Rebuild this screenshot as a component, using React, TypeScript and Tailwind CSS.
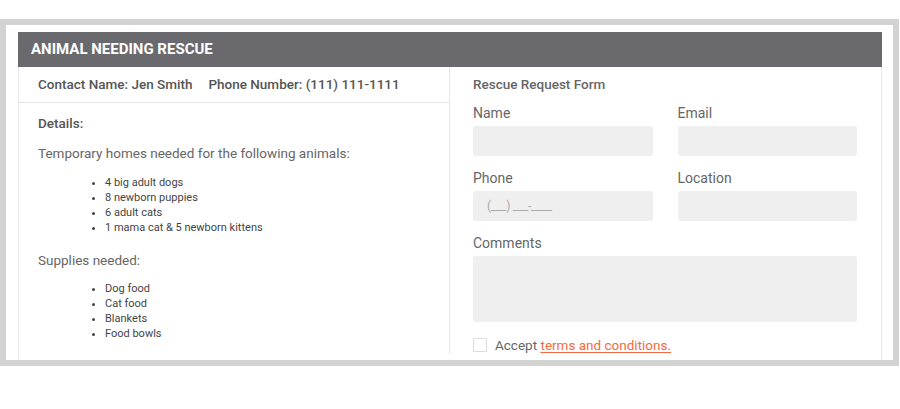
const animals = ['4 big adult dogs', '8 newborn puppies', '6 adult cats', '1 mama cat & 5 newborn kittens'];
const supplies = ['Dog food', 'Cat food', 'Blankets', 'Food bowls'];

const Field = ({ label, placeholder }: { label: string; placeholder?: string }) => (
  <div className="flex flex-col">
    <label className="text-[14px] leading-[20px] text-[#666]">{label}</label>
    <div className="mt-[3px] flex h-[30px] items-center rounded-[3px] bg-[#efefef] pl-[14px] text-[12px] tracking-tight text-[#aaa]">
      {placeholder}
    </div>
  </div>
);

const App = () => {
  return (
    <div className="h-[409px] w-[900px] bg-white pt-[19px]" style={{ fontFamily: 'Roboto, "Liberation Sans", sans-serif' }}>
      <div className="h-[347px] w-[899px] overflow-hidden border-[6px] border-[#d3d3d3] bg-white pl-[12px] pr-[11px] pt-[7px]">
        <div className="h-[400px] border border-t-0 border-[#e6e6e6]">
          <div className="-mx-px flex h-[35px] items-center bg-[#6a696e] pl-[13px] text-[15px] font-bold text-white">
            ANIMAL NEEDING RESCUE
          </div>
          <div className="flex">
            <div className="w-[431px] border-r border-[#e6e6e6]">
              <div className="flex h-[36px] items-center gap-[16px] border-b border-[#e6e6e6] pl-[19px] text-[13.5px] font-medium text-[#555]">
                <span>Contact Name: Jen Smith</span>
                <span>Phone Number: (111) 111-1111</span>
              </div>
              <div className="pl-[19px] pt-[10px] text-[#666]">
                <p className="text-[13.5px] font-medium leading-[20px] text-[#555]">Details:</p>
                <p className="mt-[10px] text-[13.5px] leading-[20px]">Temporary homes needed for the following animals:</p>
                <ul className="mt-[11.5px] list-disc pl-[67px] text-[11px] leading-[15px] text-[#444]">
                  {animals.map((a) => (
                    <li key={a}>{a}</li>
                  ))}
                </ul>
                <p className="mt-[15.5px] text-[13.5px] leading-[20px]">Supplies needed:</p>
                <ul className="mt-[10.5px] list-disc pl-[67px] text-[11px] leading-[15px] text-[#444]">
                  {supplies.map((s) => (
                    <li key={s}>{s}</li>
                  ))}
                </ul>
              </div>
            </div>
            <div className="flex-1 pl-[23px] pr-[24px] pt-[7px]">
              <p className="text-[13.5px] font-medium leading-[20px] text-[#666]">Rescue Request Form</p>
              <div className="mt-[9px] grid grid-cols-2 gap-x-[25px] gap-y-[12px]">
                <Field label="Name" />
                <Field label="Email" />
                <Field label="Phone" placeholder="(___) ___-____" />
                <Field label="Location" />
              </div>
              <div className="mt-[12px] flex flex-col">
                <label className="text-[14px] leading-[20px] text-[#666]">Comments</label>
                <div className="mt-[3px] h-[66px] rounded-[3px] bg-[#efefef]" />
              </div>
              <div className="mt-[14px] flex items-center gap-[8px] text-[13.5px] leading-[18px] text-[#666]">
                <span className="h-[14px] w-[14px] border border-[#ddd] bg-white" />
                <span>
                  Accept{' '}
                  <a className="text-[#f26a3d] underline underline-offset-2">terms and conditions.</a>
                </span>
              </div>
            </div>
          </div>
        </div>
      </div>
    </div>
  );
};

export default App;
